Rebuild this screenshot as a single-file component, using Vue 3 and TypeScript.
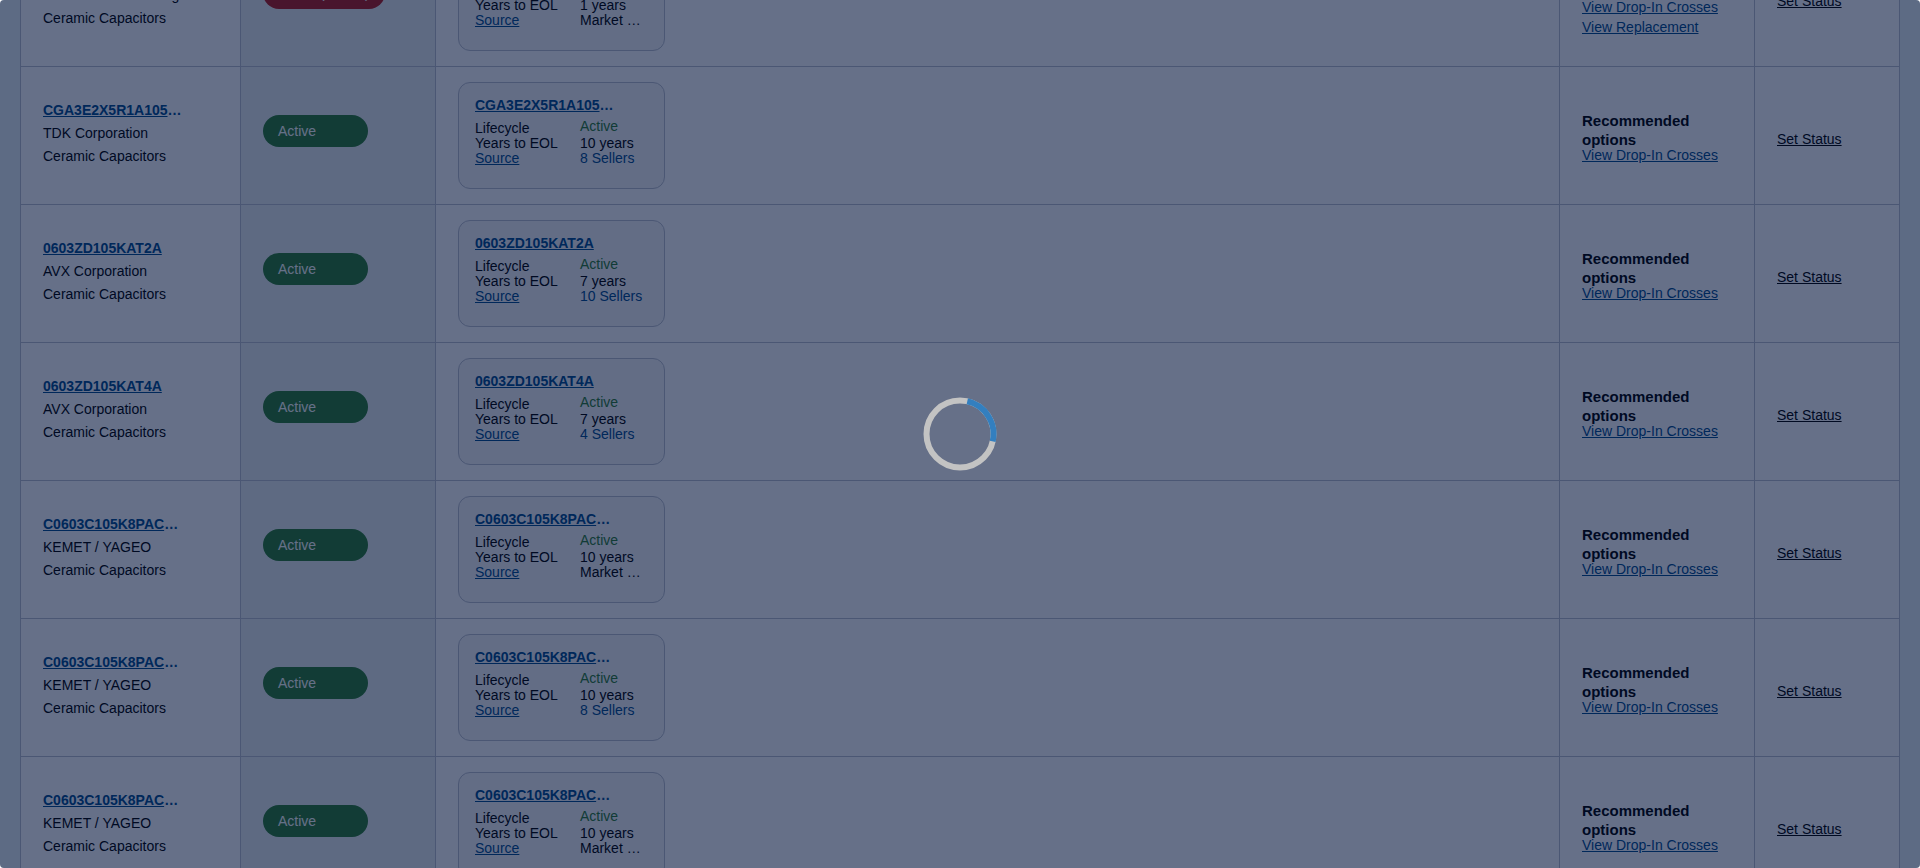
<script setup lang="ts">
interface Part {
  id: number
  name: string
  maker: string
  status: string
  discontinued?: boolean
  years: number
  source: string
  sellers?: boolean
  replacement?: boolean
}

const parts: Part[] = [
  { id: 1, name: 'GRM188R61A105KA61D', maker: 'Murata Manufacturing', status: 'Active (NRND)', discontinued: true, years: 1, source: 'Market …', replacement: true },
  { id: 2, name: 'CGA3E2X5R1A105K080AA', maker: 'TDK Corporation', status: 'Active', years: 10, source: '8 Sellers', sellers: true },
  { id: 3, name: '0603ZD105KAT2A', maker: 'AVX Corporation', status: 'Active', years: 7, source: '10 Sellers', sellers: true },
  { id: 4, name: '0603ZD105KAT4A', maker: 'AVX Corporation', status: 'Active', years: 7, source: '4 Sellers', sellers: true },
  { id: 5, name: 'C0603C105K8PACTU', maker: 'KEMET / YAGEO', status: 'Active', years: 10, source: 'Market …' },
  { id: 6, name: 'C0603C105K8PAC7867', maker: 'KEMET / YAGEO', status: 'Active', years: 10, source: '8 Sellers', sellers: true },
  { id: 7, name: 'C0603C105K8PAC7411', maker: 'KEMET / YAGEO', status: 'Active', years: 10, source: 'Market …' },
]

const LIMIT = 14
const clip = (s: string): string => s.slice(0, LIMIT)
</script>

<template>
  <div class="page">
    <table class="parts">
      <colgroup>
        <col class="c-part" />
        <col class="c-status" />
        <col />
        <col class="c-options" />
        <col class="c-action" />
      </colgroup>
      <tbody>
        <tr v-for="p in parts" :key="p.id">
          <td>
            <div class="ident">
              <div class="name"><a href="#">{{ clip(p.name) }}</a><span v-if="p.name.length > LIMIT">…</span></div>
              <div>{{ p.maker }}</div>
              <div>Ceramic Capacitors</div>
            </div>
          </td>
          <td class="status">
            <span class="pill" :class="{ red: p.discontinued }">{{ p.status }}</span>
          </td>
          <td>
            <div class="card">
              <div class="name"><a href="#">{{ clip(p.name) }}</a><span v-if="p.name.length > LIMIT">…</span></div>
              <div class="facts">
                <div class="labels">
                  <span>Lifecycle</span>
                  <span>Years to EOL</span>
                  <a href="#">Source</a>
                </div>
                <div class="values">
                  <span class="good">Active</span>
                  <span>{{ p.years }} years</span>
                  <span :class="{ sellers: p.sellers }">{{ p.source }}</span>
                </div>
              </div>
            </div>
          </td>
          <td>
            <div class="options">
              <strong>Recommended options</strong>
              <a href="#">View Drop-In Crosses</a>
              <a v-if="p.replacement" class="next" href="#">View Replacement</a>
            </div>
          </td>
          <td class="action"><button type="button" class="set">Set Status</button></td>
        </tr>
      </tbody>
    </table>
    <div class="overlay" role="status" aria-label="Loading">
      <svg class="spinner" viewBox="0 0 74 74" aria-hidden="true">
        <circle cx="37" cy="37" r="33.5" />
        <path d="M44.3 4.3A33.5 33.5 0 0 1 69.7 44.3" />
      </svg>
    </div>
  </div>
</template>

<style>
html,
body {
  margin: 0;
  background: #fff;
}
</style>

<style scoped>
.page {
  position: relative;
  box-sizing: border-box;
  height: 100vh;
  padding: 0 20px;
  overflow: hidden;
  border-radius: 4px;
  background: #e8f2f5;
  color: #000;
  font: 14px/16px "Liberation Sans", Arial, sans-serif;
}
.parts {
  width: 100%;
  margin-top: -72px;
  table-layout: fixed;
  border-collapse: collapse;
  background: #fff;
}
.c-part { width: 220px; }
.c-status,
.c-options { width: 195px; }
.c-action { width: 145px; }
td {
  height: 137px;
  padding: 0 22px;
  border: 1px solid #bbc0cc;
}
td.status {
  padding-bottom: 10px;
  height: 127px;
  background: #ebf0f0;
}
td.action {
  padding-top: 6px;
  height: 131px;
}
a { color: #004b8d; }
.ident {
  padding-bottom: 4px;
  line-height: 23px;
}
.name { font-weight: bold; color: #004b8d; }
.pill {
  display: inline-block;
  box-sizing: border-box;
  min-width: 105px;
  padding: 8px 15px;
  border-radius: 16px;
  background: #2e7d32;
  color: #fff;
  white-space: nowrap;
}
.pill.red { background: #b71c1c; }
.card {
  box-sizing: border-box;
  width: 207px;
  height: 107px;
  padding: 14px 16px;
  border: 1px solid #bbc0cc;
  border-radius: 12px;
  background: #f7f7f7;
}
.facts {
  display: grid;
  grid-template-columns: 105px 1fr;
  margin-top: 6px;
  line-height: 15px;
}
.labels,
.values {
  display: flex;
  flex-direction: column;
  align-items: flex-start;
}
.labels { padding-top: 2px; }
.good { color: #2e7d32; padding-bottom: 2px; }
.sellers { color: #004b8d; }
.options {
  display: flex;
  flex-direction: column;
  align-items: flex-start;
}
.options strong { font-size: 15px; line-height: 19px; }
.options a { line-height: 12px; }
.next { margin-top: 8px; }
.set {
  padding: 0;
  border: 0;
  background: none;
  color: inherit;
  font: inherit;
  text-decoration: underline;
}
.overlay {
  position: absolute;
  inset: 0;
  display: flex;
  align-items: center;
  justify-content: center;
  background: rgba(0, 17, 57, 0.6);
}
.spinner {
  width: 74px;
  height: 74px;
  fill: none;
  stroke-width: 6;
}
.spinner circle { stroke: #c3c3c3; }
.spinner path { stroke: #337fbf; }
</style>
